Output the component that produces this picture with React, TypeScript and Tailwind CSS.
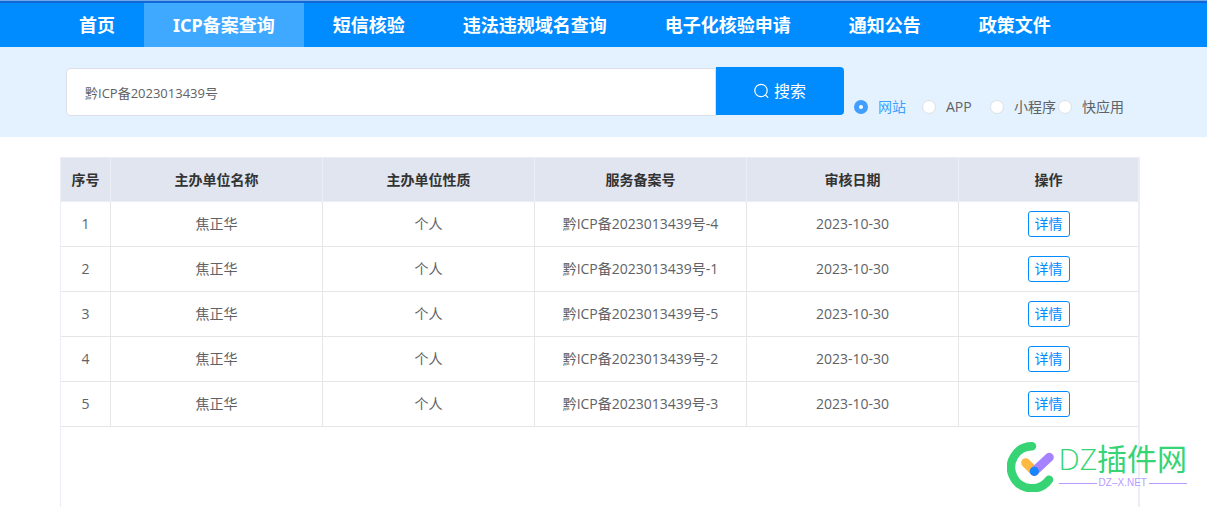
import React, { useState } from "react";
import clsx from "clsx";

interface FilingRecord {
  id: number;
  unitName: string;
  unitType: string;
  licence: string;
  auditDate: string;
}

const navItems = [
  "首页",
  "ICP备案查询",
  "短信核验",
  "违法违规域名查询",
  "电子化核验申请",
  "通知公告",
  "政策文件",
];

const serviceTypes = ["网站", "APP", "小程序", "快应用"];

const columns = [
  { title: "序号", width: "w-[50px]" },
  { title: "主办单位名称", width: "" },
  { title: "主办单位性质", width: "" },
  { title: "服务备案号", width: "" },
  { title: "审核日期", width: "" },
  { title: "操作", width: "w-[179px]" },
];

const records: FilingRecord[] = [4, 1, 5, 2, 3].map((suffix, index) => ({
  id: index + 1,
  unitName: "焦正华",
  unitType: "个人",
  licence: `黔ICP备2023013439号-${suffix}`,
  auditDate: "2023-10-30",
}));

const NavBar: React.FC = () => (
  <header className="border-t border-[#6fa8ea]">
    <nav className="flex h-[46px] border-t-2 border-[#1368d8] bg-[#008cff] pl-[50px] font-['Noto_Sans','Noto_Sans_CJK_SC',sans-serif]">
      {navItems.map((item, index) => (
        <a
          key={item}
          href="#"
          className={clsx(
            "flex items-center whitespace-nowrap px-[29px] text-lg font-bold text-white",
            index === 1 && "bg-[#3ea9ff]",
          )}
        >
          {item}
        </a>
      ))}
    </nav>
  </header>
);

const SearchBar: React.FC = () => {
  const [keyword, setKeyword] = useState("黔ICP备2023013439号");
  const [serviceType, setServiceType] = useState("网站");

  return (
    <form
      className="flex h-[90px] items-start bg-[#e4f2ff] pt-5 pr-[81px] pl-[66px]"
      onSubmit={(e) => e.preventDefault()}
    >
      <input
        type="text"
        aria-label="备案查询"
        value={keyword}
        onChange={(e) => setKeyword(e.target.value)}
        className="mt-px h-12 min-w-0 flex-1 rounded-l border border-[#dcdfe6] bg-white px-[18px] text-[13px] text-[#606266] outline-none"
      />
      <button
        type="submit"
        className="flex h-12 w-32 items-center justify-center gap-1 rounded-r bg-[#008cff] text-base text-white"
      >
        <svg viewBox="0 0 16 16" className="h-4 w-4" fill="none">
          <circle cx="7" cy="7.5" r="6.2" stroke="currentColor" strokeWidth="1.2" />
          <path
            d="M11.4 11.9 13.8 14.3"
            stroke="currentColor"
            strokeWidth="1.2"
            strokeLinecap="round"
          />
        </svg>
        搜索
      </button>
      <div className="ml-[10px] flex pt-[30px]">
        {serviceTypes.map((type) => (
          <label
            key={type}
            className={clsx(
              "flex h-5 w-[68px] items-center gap-[10px] whitespace-nowrap text-sm",
              type === serviceType ? "text-[#409eff]" : "text-[#606266]",
            )}
          >
            <input
              type="radio"
              name="serviceType"
              checked={type === serviceType}
              onChange={() => setServiceType(type)}
              className="h-[14px] w-[14px] shrink-0 appearance-none rounded-full border border-[#dcdfe6] bg-white checked:border-[5px] checked:border-[#409eff]"
            />
            {type}
          </label>
        ))}
      </div>
    </form>
  );
};

const RecordTable: React.FC = () => (
  <table className="w-full table-fixed border-separate border-spacing-0 text-center text-sm text-[#606266]">
    <thead>
      <tr className="h-11 bg-[#e0e5ef] text-[#333333]">
        {columns.map((column) => (
          <th
            key={column.title}
            className={clsx(
              "border-r border-b border-[#ebeef5] font-bold last:border-r-0",
              column.width,
            )}
          >
            {column.title}
          </th>
        ))}
      </tr>
    </thead>
    <tbody>
      {records.map((record) => (
        <tr
          key={record.id}
          className="h-[45px] *:border-r *:border-b *:border-[#e6e6e6] *:last:border-r-0"
        >
          <td>{record.id}</td>
          <td>{record.unitName}</td>
          <td>{record.unitType}</td>
          <td>{record.licence}</td>
          <td>{record.auditDate}</td>
          <td>
            <button
              type="button"
              className="inline-flex h-[26px] w-[42px] items-center justify-center rounded-[3px] border border-[#008cff] align-middle text-sm text-[#008cff]"
            >
              详情
            </button>
          </td>
        </tr>
      ))}
    </tbody>
  </table>
);

const SiteMark: React.FC = () => (
  <div className="absolute right-5 bottom-[15px] flex items-center gap-1">
    <svg viewBox="0 0 48 50" className="h-[50px] w-12" fill="none" strokeLinecap="round">
      <path d="M25 4.300A21 21 0 1 0 42 37.700" stroke="#36d475" strokeWidth="8.500" />
      <path d="M18.700 20.700 27.300 29.300" stroke="#ffb840" strokeWidth="9" />
      <path d="M27.300 29.300 42.300 15.300" stroke="#a582ff" strokeWidth="9" />
      <circle cx="27.300" cy="29.300" r="4.600" fill="#1686ff" />
    </svg>
    <div className="pb-1">
      <div className="h-9 text-3xl leading-9 whitespace-nowrap text-[#36d475]">
        <span className="font-light">DZ</span>插件网
      </div>
      <div className="flex items-center gap-[2px] pt-px font-['Liberation_Sans',sans-serif] text-[10px] leading-[10px] text-[#b79bff]">
        <span className="h-px flex-1 bg-[#b79bff]" />
        DZ–X.NET
        <span className="h-px flex-1 bg-[#b79bff]" />
      </div>
    </div>
  </div>
);

const App: React.FC = () => (
  <div className="relative flex min-h-screen flex-col bg-white font-['Open_Sans','Noto_Sans_CJK_SC',sans-serif]">
    <NavBar />
    <SearchBar />
    <main className="mt-5 mr-[67px] ml-[60px] flex-1 border-t border-r-2 border-l border-[#ebeef5]">
      <RecordTable />
    </main>
    <SiteMark />
  </div>
);

export default App;
